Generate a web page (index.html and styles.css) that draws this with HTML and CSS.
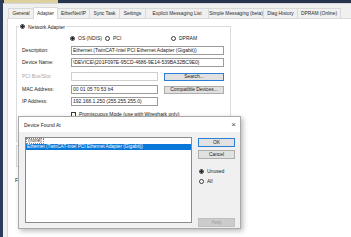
FILE: index.html
```html
<!DOCTYPE html>
<html>
<head>
<meta charset="utf-8">
<link rel="stylesheet" href="styles.css">
</head>
<body>
<div class="screen">
  <div class="sidebar"></div>
  <div class="main">
    <div class="topbar"><div class="topbar-hl"></div></div>
    <div class="tabs">
      <div class="tab w-general">General</div>
      <div class="tab tab-active w-adapter">Adapter</div>
      <div class="tab w-eip">EtherNet/IP</div>
      <div class="tab w-sync">Sync Task</div>
      <div class="tab w-settings">Settings</div>
      <div class="tab w-explicit">Explicit Messaging List</div>
      <div class="tab w-simple">Simple Messaging (beta)</div>
      <div class="tab w-diag">Diag History</div>
      <div class="tab w-dpram">DPRAM (Online)</div>
    </div>
    <div class="panel">
      <div class="group">
        <div class="group-title"><span class="radio checked"></span><span>Network Adapter</span></div>
        <div class="mode-row">
          <div class="option"><span class="radio checked"></span><span>OS (NDIS)</span></div>
          <div class="option"><span class="radio"></span><span>PCI</span></div>
          <div class="option"><span class="radio"></span><span>DPRAM</span></div>
        </div>
        <div class="form">
          <div class="label">Description:</div>
          <div class="field"><div class="input wide">Ethernet (TwinCAT-Intel PCI Ethernet Adapter (Gigabit))</div></div>
          <div class="label">Device Name:</div>
          <div class="field"><div class="input wide">\DEVICE\{201F097E-95CD-4686-9E14-539BA32BC9E0}</div></div>
          <div class="label disabled">PCI Bus/Slot:</div>
          <div class="field"><div class="input short input-disabled"></div><div class="btn btn-focus">Search...</div></div>
          <div class="label">MAC Address:</div>
          <div class="field"><div class="input short">00 01 05 70 53 b4</div><div class="btn">Compatible Devices...</div></div>
          <div class="label">IP Address:</div>
          <div class="field"><div class="input short">192.168.1.250 (255.255.255.0)</div></div>
          <div class="label"></div>
          <div class="field"><div class="check-row"><span class="checkbox"></span><span>Promiscuous Mode (use with Wireshark only)</span></div></div>
        </div>
      </div>
      <div class="group2"></div>
      <div class="freerun">Freerun Cycle (ms):</div>
    </div>
  </div>

  <div class="dialog">
    <div class="dlg-title">
      <span>Device Found At</span>
      <span class="close">×</span>
    </div>
    <div class="dlg-body">
      <div class="listbox">
        <div class="item"><span class="focus">(none)</span></div>
        <div class="item selected">Ethernet (TwinCAT-Intel PCI Ethernet Adapter (Gigabit))</div>
      </div>
      <div class="dlg-side">
        <div class="btn dlg-btn btn-focus">OK</div>
        <div class="btn dlg-btn cancel">Cancel</div>
        <div class="option side-opt first"><span class="radio checked"></span><span>Unused</span></div>
        <div class="option side-opt"><span class="radio"></span><span>All</span></div>
        <div class="btn dlg-btn help">Help</div>
      </div>
    </div>
  </div>
</div>
</body>
</html>
```

FILE: styles.css
```css
* { box-sizing: border-box; margin: 0; padding: 0; }
html, body { width: 351px; height: 237px; overflow: hidden; }
body {
  font-family: "Liberation Sans", Arial, sans-serif;
  font-size: 5px;
  color: #222;
  background: #f0f0f0;
}
.screen { position: relative; display: flex; width: 351px; height: 237px; }
.sidebar { width: 3px; flex: none; background: #2b3b5a; }
.main { flex: 1; display: flex; flex-direction: column; background: #f0f0f0; min-width: 0; }
.topbar { height: 3px; flex: none; display: flex; background: #26344e; }
.topbar-hl { width: 54px; margin-left: 1px; background: #dcd19c; }

.tabs { height: 15px; flex: none; display: flex; align-items: flex-end; padding-left: 5px; border-top: 1px solid #d4d7dc; }
.tab {
  height: 10px; line-height: 9px; text-align: center; white-space: nowrap; font-size: 4.85px;
  border: 1px solid #d9d9d9; border-bottom: none; background: #f0f0f0;
  margin-left: -1px; flex: none; color: #2a2a2a; overflow: hidden;
}
.tab:first-child { margin-left: 0; }
.tab-active { height: 12px; line-height: 11px; margin-bottom: -1px; background: #fff; position: relative; z-index: 1; }
.w-general { width: 26px; }
.w-adapter { width: 25px; }
.w-eip { width: 33px; }
.w-sync { width: 31px; }
.w-settings { width: 27px; }
.w-explicit { width: 64px; }
.w-simple { width: 56px; }
.w-diag { width: 35px; }
.w-dpram { width: 44px; }

.panel { flex: 1; margin-left: 4px; background: #fff; border-left: 1px solid #d9d9d9; border-top: 1px solid #d9d9d9; }
.group { width: 215px; height: 116px; margin: 7px 0 0 8px; border: 1px solid #dcdcdc; }
.group-title {
  display: flex; align-items: center; gap: 3px; width: fit-content;
  height: 7px; margin: -4px 0 0 2px; padding: 0 1px; background: #fff;
}
.radio {
  width: 5px; height: 5px; border-radius: 50%; border: 1px solid #3a3a3a; background: #fff; flex: none;
}
.radio.checked { background: radial-gradient(circle, #1e1e1e 0 1.1px, #fff 1.5px); }
.mode-row { display: grid; grid-template-columns: 35px 66px auto; margin: 5px 0 0 53px; height: 6px; }
.option { display: flex; align-items: center; gap: 3px; height: 6px; white-space: nowrap; }

.form {
  display: grid; grid-template-columns: 49px 153px;
  grid-template-rows: 12px 14px 13px 12px 14px 6px;
  margin: 5px 0 0 5px;
}
.label { line-height: 9px; white-space: nowrap; }
.label.disabled { color: #a6a6a6; }
.field { display: flex; align-items: flex-start; }
.input {
  height: 9px; line-height: 7px; padding-left: 1px; border: 1px solid #9b9b9b; background: #fff;
  white-space: nowrap; overflow: hidden;
}
.input.wide { width: 153px; }
.input.short { width: 87px; }
.input-disabled { border-color: #cfcfcf; }
.btn {
  height: 8px; line-height: 6px; text-align: center; border: 1px solid #adadad; background: #e1e1e1;
  white-space: nowrap; font-size: 4.9px;
}
.field .btn { width: 60px; margin: 1px 0 0 6px; }
.btn-focus { border-color: #2a7fd4; }
.check-row { display: flex; align-items: center; gap: 3px; height: 6px; white-space: nowrap; }
.checkbox { width: 5px; height: 5px; border: 1px solid #3a3a3a; background: #fff; flex: none; }

.group2 { width: 215px; height: 22px; margin: 3px 0 0 8px; border: 1px solid #dcdcdc; }
.freerun { margin: 10px 0 0 7px; white-space: nowrap; }

.dialog {
  position: absolute; left: 18px; top: 116px; width: 223px; height: 113px;
  background: #f0f0f0; border: 1px solid #a9a9a9;
  box-shadow: 2px 2px 5px rgba(0,0,0,0.28);
  display: flex; flex-direction: column;
}
.dlg-title {
  height: 15px; flex: none; background: #fff; display: flex; align-items: center;
  justify-content: space-between; padding: 0 4px 0 5px; color: #1e1e1e;
}
.close { font-size: 8px; line-height: 8px; color: #444; }
.dlg-body { flex: 1; display: flex; align-items: flex-start; padding: 5px 5px 0 6px; }
.listbox { width: 167px; height: 86px; background: #fff; border: 1px solid #8a8a8a; font-size: 4.7px; }
.item { height: 6px; line-height: 6px; white-space: nowrap; padding-left: 0; }
.focus { display: inline-block; height: 6px; line-height: 4px; border: 1px dotted #888; padding: 0 1px; }
.selected { background: #0a78d8; color: #fff; padding-left: 1px; }
.dlg-side { width: 37px; margin-left: 6px; height: 91px; display: flex; flex-direction: column; }
.dlg-btn { width: 37px; height: 9px; line-height: 7px; margin-top: 1px; flex: none; }
.cancel { margin-top: 3px; }
.side-opt { margin-top: 4px; margin-left: 1px; }
.side-opt.first { margin-top: 9px; }
.help { margin-top: auto; margin-bottom: 1px; background: #cccccc; border-color: #bfbfbf; color: #9c9c9c; }
```
